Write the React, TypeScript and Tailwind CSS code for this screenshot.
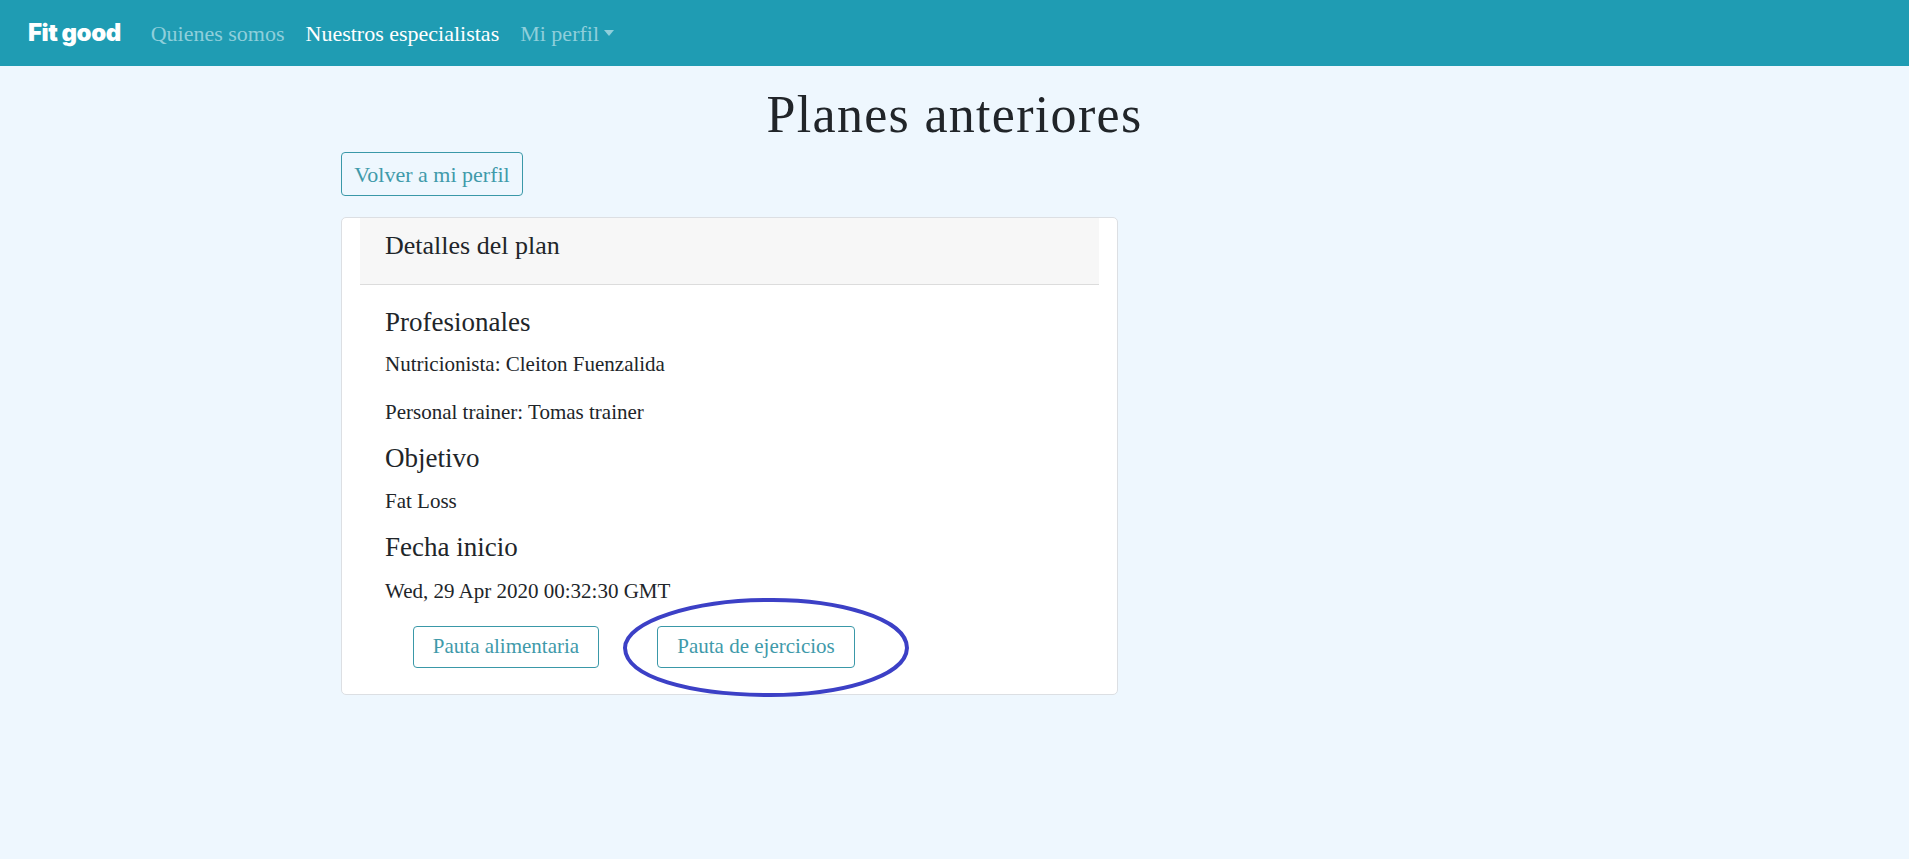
import React from "react";

const serif = "font-['Liberation_Serif','Times_New_Roman',serif]";

function Navbar() {
  return (
    <nav className="flex h-[66px] items-center bg-[#1f9cb3] pl-[28px]">
      <span className="font-['Inter',sans-serif] text-[24px] font-black tracking-[-0.02em] text-white">
        Fit good
      </span>
      <div className={`${serif} ml-[30px] flex items-center gap-[21px] text-[22px]`}>
        <a className="text-[#8fcfdb]">Quienes somos</a>
        <a className="text-white">Nuestros especialistas</a>
        <a className="flex items-center text-[#8fcfdb]">
          Mi perfil
          <span className="ml-[5px] inline-block h-0 w-0 border-x-[5px] border-t-[6px] border-x-transparent border-t-[#8fcfdb]" />
        </a>
      </div>
    </nav>
  );
}

function OutlineButton({ label, w }: { label: string; w: string }) {
  return (
    <button
      className={`${serif} ${w} flex h-[42px] items-center justify-center rounded-[4px] border border-[#3a98a8] text-[21px] text-[#3f9aaa]`}
    >
      {label}
    </button>
  );
}

export default function App() {
  return (
    <div className={`${serif} min-h-screen bg-[#eef7fe] text-[#212529]`}>
      <Navbar />
      <h1 className="mt-[20px] text-center text-[52px] leading-[58px] tracking-[0.025em]">
        Planes anteriores
      </h1>
      <div className="ml-[341px] w-[777px]">
        <button className="mt-[8px] flex h-[44px] w-[182px] items-center justify-center rounded-[4px] border border-[#3a98a8] text-[22px] text-[#3f9aaa]">
          Volver a mi perfil
        </button>
        <div className="relative mt-[21px] rounded-[5px] border border-[#dcdfe3] bg-white">
          <div className="mx-[18px]">
            <div className="h-[67px] border-b border-[#dcdcdc] bg-[#f7f7f7] px-[25px] pt-[13px]">
              <h5 className="text-[26px] leading-[29px]">Detalles del plan</h5>
            </div>
            <div className="px-[25px] pt-[23px] pb-[26px]">
              <h5 className="text-[27px] leading-[29px]">Profesionales</h5>
              <p className="mt-[13px] text-[21px] leading-[29px]">Nutricionista: Cleiton Fuenzalida</p>
              <p className="mt-[19px] text-[21px] leading-[29px]">Personal trainer: Tomas trainer</p>
              <h5 className="mt-[17px] text-[27px] leading-[29px]">Objetivo</h5>
              <p className="mt-[14px] text-[21px] leading-[29px]">Fat Loss</p>
              <h5 className="mt-[17px] text-[27px] leading-[29px]">Fecha inicio</h5>
              <p className="mt-[15px] text-[21px] leading-[29px]">Wed, 29 Apr 2020 00:32:30 GMT</p>
              <div className="mt-[20px] ml-[28px] flex gap-[58px]">
                <OutlineButton label="Pauta alimentaria" w="w-[186px]" />
                <OutlineButton label="Pauta de ejercicios" w="w-[198px]" />
              </div>
            </div>
          </div>
          <svg
            className="pointer-events-none absolute left-[279px] top-[378px]"
            width="290"
            height="103"
            viewBox="0 0 290 103"
            fill="none"
          >
            <path
              d="M146 4 C 215 3, 286 22, 286 52 C 285 82, 215 100, 143 99 C 70 98, 5 82, 4 52 C 4 25, 75 4, 146 4 Z"
              stroke="#3c40c6"
              strokeWidth="4"
            />
          </svg>
        </div>
      </div>
    </div>
  );
}
